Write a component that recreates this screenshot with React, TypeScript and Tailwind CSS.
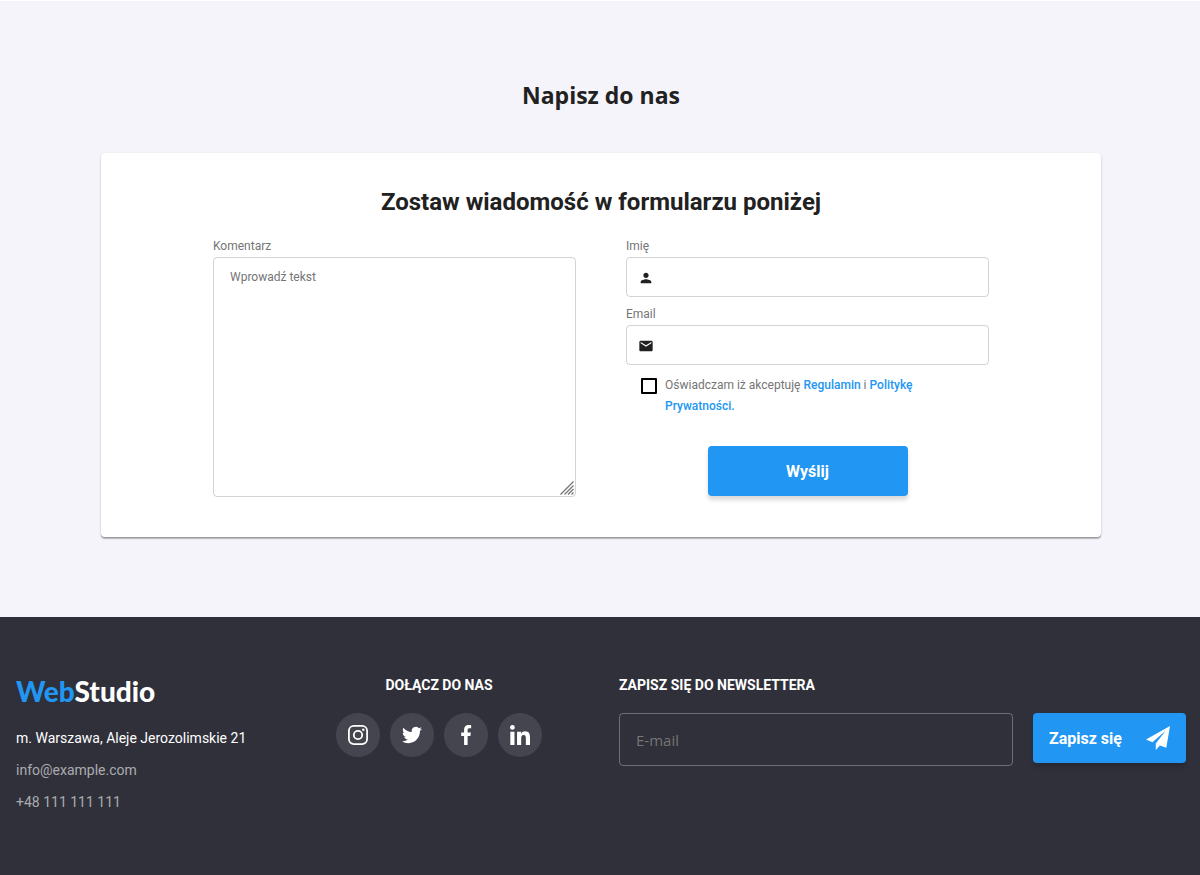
import type { ReactNode } from 'react';
import { MdEmail, MdPerson } from 'react-icons/md';

const socials: { name: string; icon: ReactNode }[] = [
  {
    name: 'Instagram',
    icon: (
      <svg viewBox="0 0 20 20" className="size-5" fill="none" stroke="currentColor" aria-hidden="true">
        <rect x="0.9" y="0.9" width="18.2" height="18.2" rx="5" strokeWidth="1.8" />
        <circle cx="10" cy="10" r="4.2" strokeWidth="1.8" />
        <circle cx="15.3" cy="4.7" r="1.2" fill="currentColor" stroke="none" />
      </svg>
    ),
  },
  {
    name: 'Twitter',
    icon: (
      <svg viewBox="0 0 24 24" className="size-5" fill="currentColor" aria-hidden="true">
        <path d="M23.953 4.57a10 10 0 01-2.825.775 4.958 4.958 0 002.163-2.723c-.951.555-2.005.959-3.127 1.184a4.92 4.92 0 00-8.384 4.482C7.69 8.095 4.067 6.13 1.64 3.162a4.822 4.822 0 00-.666 2.475c0 1.71.87 3.213 2.188 4.096a4.904 4.904 0 01-2.228-.616v.06a4.923 4.923 0 003.946 4.827 4.996 4.996 0 01-2.212.085 4.936 4.936 0 004.604 3.417 9.867 9.867 0 01-6.102 2.105c-.39 0-.779-.023-1.17-.067a13.995 13.995 0 007.557 2.209c9.053 0 13.998-7.496 13.998-13.985 0-.21 0-.42-.015-.63A9.935 9.935 0 0024 4.59z" />
      </svg>
    ),
  },
  {
    name: 'Facebook',
    icon: (
      <svg viewBox="0 0 20 20" className="size-5" fill="currentColor" aria-hidden="true">
        <path d="M13.33 3.32h1.83V.14C14.84.1 13.76 0 12.5 0 9.87 0 8.07 1.66 8.07 4.7v2.8H5.17v3.56h2.9V20h3.55v-8.94h2.78l.44-3.56h-3.22V5.06c0-1.03.28-1.74 1.71-1.74z" />
      </svg>
    ),
  },
  {
    name: 'LinkedIn',
    icon: (
      <svg viewBox="0 0 20 20" className="size-5" fill="currentColor" aria-hidden="true">
        <path d="M20 20v-7.34c0-3.6-.78-6.36-4.98-6.36-2.02 0-3.38 1.11-3.93 2.16h-.06V6.64H7.05V20h4.15v-6.62c0-1.74.33-3.43 2.49-3.43 2.13 0 2.16 1.99 2.16 3.54V20zM.33 6.65h4.15V20H.33zM2.4 0a2.4 2.4 0 100 4.81A2.4 2.4 0 002.4 0z" />
      </svg>
    ),
  },
];

function Field({ id, label, type, icon }: { id: string; label: string; type: string; icon: ReactNode }) {
  return (
    <div>
      <label htmlFor={id} className="mb-0.5 block text-xs leading-[18px] text-[#757575]">
        {label}
      </label>
      <div className="flex h-10 items-center rounded border border-[#212121]/20 pt-0.5 pl-[11px]">
        {icon}
        <input id={id} type={type} className="ml-3 min-w-0 flex-1 self-stretch bg-transparent pr-3 text-xs outline-none" />
      </div>
    </div>
  );
}

function ContactForm() {
  return (
    <form className="mx-auto max-w-[1000px] rounded bg-white px-6 pt-8 pb-10 shadow-[0_2px_1px_rgba(0,0,0,0.2),0_1px_1px_rgba(0,0,0,0.14),0_1px_3px_rgba(0,0,0,0.12)] lg:px-28">
      <h3 className="mb-[18px] text-center text-2xl font-bold leading-[34px]">Zostaw wiadomość w formularzu poniżej</h3>
      <div className="grid gap-x-[50px] gap-y-4 md:grid-cols-2">
        <div>
          <label htmlFor="comment" className="mb-0.5 block text-xs leading-[18px] text-[#757575]">
            Komentarz
          </label>
          <div className="relative">
            <textarea
              id="comment"
              placeholder="Wprowadź tekst"
              className="block h-60 w-full resize-none rounded border border-[#212121]/20 px-4 py-3 text-xs leading-[14px] outline-none placeholder:text-[#757575]"
            />
            <svg viewBox="0 0 14 14" className="pointer-events-none absolute right-0.5 bottom-0.5 size-3.5" stroke="#757575" strokeWidth="1.3" aria-hidden="true">
              <path d="M0.5 13.5L13.5 0.5M4.5 13.5L13.5 4.5M8 13.5L13.5 8M11.5 13.5L13.5 11.5" />
            </svg>
          </div>
        </div>
        <div>
          <div className="flex flex-col gap-2">
            <Field id="name" label="Imię" type="text" icon={<MdPerson className="size-4 text-[#212121]" aria-hidden="true" />} />
            <Field id="email" label="Email" type="email" icon={<MdEmail className="size-4 text-[#212121]" aria-hidden="true" />} />
          </div>
          <div className="mt-2.5 flex gap-2 px-[15px]">
            <input
              id="consent"
              type="checkbox"
              className="mt-[3px] size-4 shrink-0 appearance-none rounded-[1px] border-2 border-black checked:bg-[#2196f3]"
            />
            <label htmlFor="consent" className="max-w-[300px] text-xs leading-[21px] text-[#757575]">
              Oświadczam iż akceptuję{' '}
              <a href="#regulamin" className="font-medium text-[#2196f3]">Regulamin</a> i{' '}
              <a href="#prywatnosc" className="font-medium text-[#2196f3]">Politykę Prywatności.</a>
            </label>
          </div>
          <button type="submit" className="mx-auto mt-[29px] block h-[50px] w-[200px] rounded bg-[#2196f3] pt-0.5 font-bold text-white shadow-[0_4px_4px_rgba(0,0,0,0.15)]">
            Wyślij
          </button>
        </div>
      </div>
    </form>
  );
}

function Footer() {
  return (
    <footer className="flex-1 bg-[#2f303a] pt-[60px] pr-3.5 pb-[60px] pl-4 text-white">
      <div className="mx-auto flex max-w-[1170px] flex-wrap gap-y-10">
        <div className="w-[320px]">
          <a href="#home" className="mb-[22px] block font-[Lato,sans-serif] text-[28px] font-black leading-7">
            <span className="text-[#2196f3]">Web</span>Studio
          </a>
          <address className="flex flex-col gap-2.5 text-sm leading-[22px] not-italic">
            <span>m. Warszawa, Aleje Jerozolimskie 21</span>
            <a href="mailto:info@example.com" className="text-white/60">info@example.com</a>
            <a href="tel:+48111111111" className="text-white/60">+48 111 111 111</a>
          </address>
        </div>
        <div>
          <h4 className="mb-5 text-center text-sm font-bold leading-4">DOŁĄCZ DO NAS</h4>
          <ul className="flex gap-2.5">
            {socials.map(({ name, icon }) => (
              <li key={name}>
                <a href={'#' + name.toLowerCase()} aria-label={name} className="flex size-11 items-center justify-center rounded-full bg-white/10">
                  {icon}
                </a>
              </li>
            ))}
          </ul>
        </div>
        <form className="min-w-[300px] flex-1 lg:ml-[77px]">
          <label htmlFor="newsletter" className="mb-5 block text-sm font-bold leading-4">ZAPISZ SIĘ DO NEWSLETTERA</label>
          <div className="flex items-start gap-5">
            <input
              id="newsletter"
              type="email"
              placeholder="E-mail"
              className="h-[53px] min-w-0 flex-1 rounded border border-white/30 bg-transparent px-4 font-['Open_Sans',sans-serif] text-[15px] outline-none placeholder:text-[#757575]"
            />
            <button type="submit" className="flex h-[50px] w-[153px] shrink-0 items-center justify-between rounded bg-[#2196f3] px-4 font-bold shadow-[0_4px_4px_rgba(0,0,0,0.15)]">
              <span className="pt-0.5">Zapisz się</span>
              <svg viewBox="0 0 24 24" className="size-6" fill="currentColor" aria-hidden="true">
                <path d="M24 0L0 13.5l6.4 2.7L19.6 4.8 9.8 17.4V24l4.1-4.4 6.4 2.2z" />
              </svg>
            </button>
          </div>
        </form>
      </div>
    </footer>
  );
}

export default function App() {
  return (
    <div className="flex min-h-screen flex-col border-t border-white bg-[#f5f4fa] font-[Roboto,sans-serif] text-[#212121]">
      <section className="py-20 pr-3.5 pl-4">
        <h2 className="mb-11 text-center font-['Open_Sans',sans-serif] text-[23px] font-bold leading-7">Napisz do nas</h2>
        <ContactForm />
      </section>
      <Footer />
    </div>
  );
}
